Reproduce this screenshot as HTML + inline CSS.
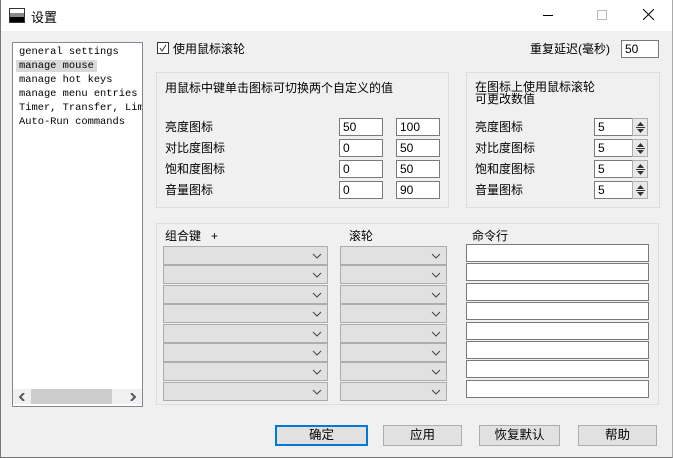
<!DOCTYPE html>
<html><head><meta charset="utf-8"><style>
*{box-sizing:border-box;margin:0;padding:0}
body{width:673px;height:458px;background:#f0f0f0;font-family:"Liberation Sans","Noto Sans CJK SC",sans-serif;font-size:12px;color:#000;position:relative;overflow:hidden}
.a{position:absolute}
.tb{left:0;top:0;width:673px;height:31px;background:#fff}
.win{left:0;top:0;width:673px;height:458px;border-left:1px solid #777;border-bottom:1px solid #777;border-right:1px solid #aaa;pointer-events:none}
.lst{left:12px;top:42px;width:131px;height:365px;background:#fff;border:1px solid #828790;font-family:"Liberation Mono",monospace;font-size:10.4px;line-height:14px;padding:2px 0 0 6px;white-space:nowrap;overflow:hidden}
.grp{border:1px solid #dcdcdc}
.in{background:#fff;border:1px solid #7a7a7a;height:18px;font-size:12px;padding:1px 0 0 3px;line-height:15px}
.cb{background:#e1e1e1;border:1px solid #adadad;height:19px}
.cb svg{position:absolute;right:5px;top:6px}
.btn{background:#e1e1e1;border:1px solid #adadad;height:21px;text-align:center;line-height:19px;font-size:12.5px}
.sp{background:#e8e8e8;border:1px solid #adadad;width:16px;height:18px}
.sp svg{position:absolute;left:3px;top:3px}
</style></head><body>
<div class="a tb"></div>
<div class="a" style="left:9px;top:8px;width:16px;height:15px;border:1px solid #333;background:linear-gradient(#fff 0 30%,#888 30% 60%,#000 60%)"></div>
<div class="a" style="left:31px;top:7px;font-size:13px">设置</div>
<div class="a" style="left:543px;top:15px;width:10px;height:1px;background:#000"></div>
<div class="a" style="left:597px;top:10px;width:10px;height:10px;border:1px solid #bbb"></div>
<svg class="a" style="left:643px;top:9px" width="11" height="11"><path d="M0 0L11 11M11 0L0 11" stroke="#000" stroke-width="1"/></svg>

<div class="a lst">general settings<br><span style="background:#d9d9d9;margin-left:-3px;padding:0 3px">manage mouse</span><br>manage hot keys<br>manage menu entries<br>Timer, Transfer, Lim:<br>Auto-Run commands</div>
<div class="a" style="left:13px;top:389px;width:129px;height:15px;background:#f0f0f0"></div>
<div class="a" style="left:31px;top:389px;width:81px;height:15px;background:#cdcdcd"></div>
<svg class="a" style="left:19px;top:393px" width="6" height="8"><path d="M5 0L1 4L5 8" stroke="#555" stroke-width="2" fill="none"/></svg>
<svg class="a" style="left:130px;top:393px" width="6" height="8"><path d="M1 0L5 4L1 8" stroke="#555" stroke-width="2" fill="none"/></svg>

<div class="a" style="left:157px;top:42px;width:12px;height:12px;border:1px solid #333;background:#fff"></div>
<svg class="a" style="left:158px;top:43px" width="10" height="10"><path d="M2 5L4 8L8 2" stroke="#333" fill="none"/></svg>
<div class="a" style="left:173px;top:40px">使用鼠标滚轮</div>
<div class="a" style="left:530px;top:40px">重复延迟(毫秒)</div>
<div class="a in" style="left:621px;top:40px;width:38px">50</div>

<div class="a grp" style="left:156px;top:72px;width:293px;height:136px"></div>
<div class="a" style="left:165px;top:79px">用鼠标中键单击图标可切换两个自定义的值</div>
<div class="a" style="left:165px;top:118px">亮度图标</div>
<div class="a" style="left:165px;top:139px">对比度图标</div>
<div class="a" style="left:165px;top:160px">饱和度图标</div>
<div class="a" style="left:165px;top:181px">音量图标</div>
<div class="a in" style="left:339px;top:118px;width:44px">50</div><div class="a in" style="left:396px;top:118px;width:44px">100</div>
<div class="a in" style="left:339px;top:139px;width:44px">0</div><div class="a in" style="left:396px;top:139px;width:44px">50</div>
<div class="a in" style="left:339px;top:160px;width:44px">0</div><div class="a in" style="left:396px;top:160px;width:44px">50</div>
<div class="a in" style="left:339px;top:181px;width:44px">0</div><div class="a in" style="left:396px;top:181px;width:44px">90</div>

<div class="a grp" style="left:466px;top:72px;width:194px;height:136px"></div>
<div class="a" style="left:475px;top:81px;line-height:12px">在图标上使用鼠标滚轮<br>可更改数值</div>
<div class="a" style="left:475px;top:118px">亮度图标</div>
<div class="a" style="left:475px;top:139px">对比度图标</div>
<div class="a" style="left:475px;top:160px">饱和度图标</div>
<div class="a" style="left:475px;top:181px">音量图标</div>
<div id="sp"></div>

<div class="a grp" style="left:156px;top:223px;width:503px;height:182px"></div>
<div class="a" style="left:165px;top:227px">组合键&nbsp;&nbsp;&nbsp;+</div>
<div class="a" style="left:349px;top:227px">滚轮</div>
<div class="a" style="left:472px;top:227px">命令行</div>
<div id="rows"></div>
<script>
var h='';for(var i=0;i<8;i++){var y=246+i*19.4;
var s='<svg width="10" height="6"><path d="M1 1 L5 5 L9 1" stroke="#444" fill="none"/></svg>';
h+='<div class="a cb" style="left:163px;top:'+y+'px;width:165px">'+s+'</div>';
h+='<div class="a cb" style="left:340px;top:'+y+'px;width:107px">'+s+'</div>';
h+='<div class="a in" style="left:466px;top:'+(244+i*19.4)+'px;width:183px"></div>';}
document.getElementById('rows').innerHTML=h;
var g='';for(var j=0;j<4;j++){var t=118+j*21;
g+='<div class="a in" style="left:594px;top:'+t+'px;width:39px">5</div><div class="a sp" style="left:632px;top:'+t+'px"><svg width="9" height="11"><path d="M4.5 0L8 4H1Z M1 7H8L4.5 11Z" fill="#333"/><path d="M0 5.5H9" stroke="#333"/></svg></div>';}
document.getElementById('sp').innerHTML=g;
</script>
<div class="a btn" style="left:275px;top:425px;width:93px;border:2px solid #0078d7;line-height:17px">确定</div>
<div class="a btn" style="left:383px;top:425px;width:79px">应用</div>
<div class="a btn" style="left:479px;top:425px;width:81px">恢复默认</div>
<div class="a btn" style="left:578px;top:425px;width:79px">帮助</div>
<div class="a win"></div>
</body></html>
